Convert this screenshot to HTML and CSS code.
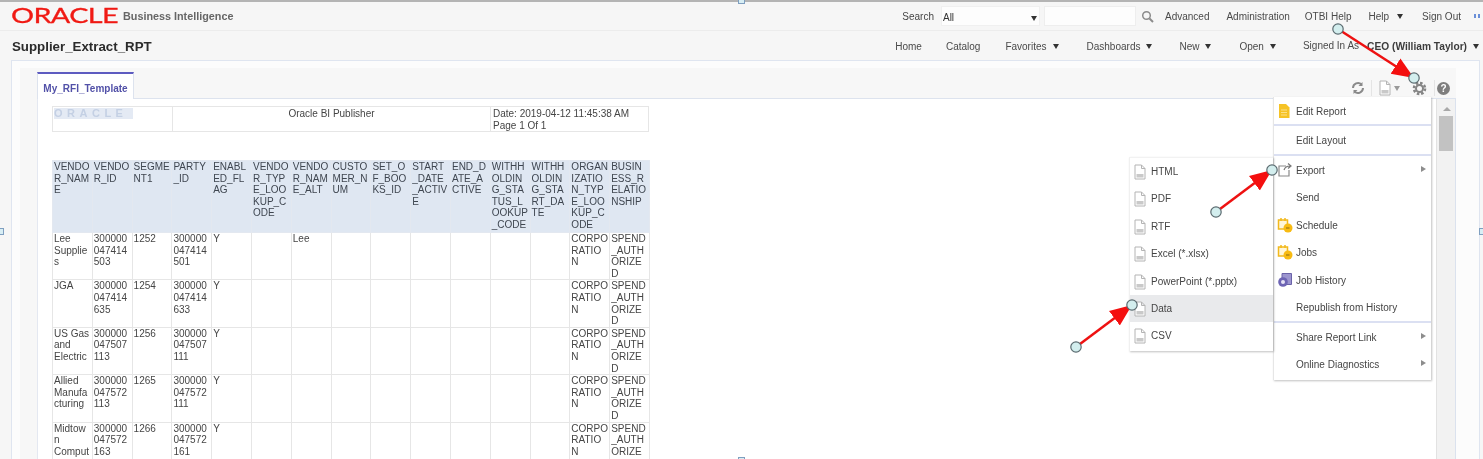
FILE: index.html
```html
<!DOCTYPE html>
<html lang="en">
<head>
    <meta charset="UTF-8">
    <title>Supplier_Extract_RPT - Oracle Business Intelligence</title>
    <link rel="stylesheet" href="styles.css">
</head>
<body>
<svg class="defs" width="0" height="0">
    <symbol id="i-file" viewBox="0 0 14 16">
        <path d="M2 1h6.500L12 4.500V15H2zM8.500 1v3.500H12" fill="#fff" stroke="#b4b4b4"/>
        <path d="M3.500 10h7v3.500h-7z" fill="#c9c9c9"/>
    </symbol>
    <symbol id="i-doc" viewBox="0 0 14 16">
        <path d="M2 1h7l3.500 3.500V15H2z" fill="#f6c326"/>
        <path d="M4 7h6M4 9.500h6M4 12h6" stroke="#fbe08a"/>
    </symbol>
    <symbol id="i-export" viewBox="0 0 16 16">
        <path d="M9 4H2v10h10V8" fill="none" stroke="#8a8a8a" stroke-width="1.200"/>
        <path d="M7 8c1-3 3-4 6-4M11 1.500 14 4l-3 2.500" fill="none" stroke="#777" stroke-width="1.200"/>
    </symbol>
    <symbol id="i-cal" viewBox="0 0 16 16">
        <path d="M1.500 3h9v9h-9z" fill="#fff6d8" stroke="#f2b91d" stroke-width="1.500"/>
        <path d="M4 1v3M8 1v3" stroke="#f2b91d" stroke-width="1.500"/>
        <circle cx="11" cy="11" r="4.500" fill="#f8bb12"/>
        <path d="M9 11h3.500" stroke="#8a6a10"/>
    </symbol>
    <symbol id="i-history" viewBox="0 0 16 16">
        <path d="M5 1.500h9.500v11H5z" fill="#9c95cf" stroke="#6a62a8"/>
        <circle cx="6" cy="10" r="4.800" fill="#6d64b4"/>
        <circle cx="6" cy="10" r="2" fill="#e6e3f5"/>
    </symbol>
</svg>

<div class="page">
    <span class="grab grab-top"></span>
    <span class="grab grab-left"></span>
    <span class="grab grab-right"></span>
    <span class="grab grab-bottom"></span>

    <header class="topbar">
        <div class="brand">
            <span class="logo">ORACLE</span>
            <span class="product">Business Intelligence</span>
        </div>
        <div class="global-nav">
            <span class="search-label">Search</span>
            <div class="search-select">All<i class="caret"></i></div>
            <div class="search-input"></div>
            <svg class="search-icon" width="13" height="13" viewBox="0 0 13 13"><circle cx="5.500" cy="5.500" r="3.800" fill="none" stroke="#8c8c8c" stroke-width="1.500"/><path d="M8.500 8.500 12 12" stroke="#8c8c8c" stroke-width="2"/></svg>
            <a>Advanced</a>
            <a class="nav-admin">Administration</a>
            <a>OTBI Help</a>
            <a class="nav-help">Help<i class="caret"></i></a>
            <a>Sign Out</a>
            <span class="more-dots"></span>
        </div>
    </header>

    <nav class="navbar">
        <h1>Supplier_Extract_RPT</h1>
        <div class="main-nav">
            <a class="nav-home">Home</a>
            <a class="nav-catalog">Catalog</a>
            <a class="nav-wide">Favorites<i class="caret"></i></a>
            <a>Dashboards<i class="caret"></i></a>
            <a class="nav-wide">New<i class="caret"></i></a>
            <a>Open<i class="caret"></i></a>
            <a class="nav-signed">Signed In As</a>
            <a class="user">CEO (William Taylor)<i class="caret"></i></a>
        </div>
    </nav>

    <section class="panel">
        <div class="inner">
            <div class="tabstrip">
                <div class="tab">My_RFI_Template</div>
                <div class="tools">
                    <svg width="14" height="14" viewBox="0 0 14 14"><path d="M2 7a5 5 0 0 1 8.500-3.500M12 7a5 5 0 0 1-8.500 3.500" fill="none" stroke="#8a8a8a" stroke-width="2"/><path d="M11.500 1v4h-4zM2.500 13V9h4z" fill="#8a8a8a"/></svg>
                    <span class="tool-sep"></span>
                    <svg width="14" height="16" viewBox="0 0 14 16"><use href="#i-file"/></svg>
                    <i class="caret caret-light"></i>
                    <svg class="gear" width="15" height="15" viewBox="0 0 15 15"><circle cx="7.500" cy="7.500" r="5.500" fill="none" stroke="#858585" stroke-width="2.600" stroke-dasharray="2.500 1.800"/><circle cx="7.500" cy="7.500" r="3.500" fill="none" stroke="#858585" stroke-width="2"/></svg>
                    <span class="tool-sep"></span>
                    <span class="help">?</span>
                </div>
            </div>
            <div class="content">
                <div class="report">
                    <table class="report-head">
                        <tr>
                            <td class="head-logo"><span>ORACLE</span></td>
                            <td class="head-title">Oracle BI Publisher</td>
                            <td class="head-date">Date: 2019-04-12 11:45:38 AM<br>Page 1 Of 1</td>
                        </tr>
                    </table>
                    <table class="data">
                        <colgroup>
                            <col><col><col><col><col><col><col><col><col><col><col><col><col><col><col>
                        </colgroup>
                        <tr class="data-head">
                            <th>VENDO<br>R_NAM<br>E</th>
                            <th>VENDO<br>R_ID</th>
                            <th>SEGME<br>NT1</th>
                            <th>PARTY<br>_ID</th>
                            <th>ENABL<br>ED_FL<br>AG</th>
                            <th>VENDO<br>R_TYP<br>E_LOO<br>KUP_C<br>ODE</th>
                            <th>VENDO<br>R_NAM<br>E_ALT</th>
                            <th>CUSTO<br>MER_N<br>UM</th>
                            <th>SET_O<br>F_BOO<br>KS_ID</th>
                            <th>START<br>_DATE<br>_ACTIV<br>E</th>
                            <th>END_D<br>ATE_A<br>CTIVE</th>
                            <th>WITHH<br>OLDIN<br>G_STA<br>TUS_L<br>OOKUP<br>_CODE</th>
                            <th>WITHH<br>OLDIN<br>G_STA<br>RT_DA<br>TE</th>
                            <th>ORGAN<br>IZATIO<br>N_TYP<br>E_LOO<br>KUP_C<br>ODE</th>
                            <th>BUSIN<br>ESS_R<br>ELATIO<br>NSHIP</th>
                        </tr>
                        <tr>
                            <td>Lee<br>Supplie<br>s</td><td>300000<br>047414<br>503</td><td>1252</td><td>300000<br>047414<br>501</td><td>Y</td><td></td><td>Lee</td><td></td><td></td><td></td><td></td><td></td><td></td><td>CORPO<br>RATIO<br>N</td><td>SPEND<br>_AUTH<br>ORIZE<br>D</td>
                        </tr>
                        <tr>
                            <td>JGA</td><td>300000<br>047414<br>635</td><td>1254</td><td>300000<br>047414<br>633</td><td>Y</td><td></td><td></td><td></td><td></td><td></td><td></td><td></td><td></td><td>CORPO<br>RATIO<br>N</td><td>SPEND<br>_AUTH<br>ORIZE<br>D</td>
                        </tr>
                        <tr>
                            <td>US Gas<br>and<br>Electric</td><td>300000<br>047507<br>113</td><td>1256</td><td>300000<br>047507<br>111</td><td>Y</td><td></td><td></td><td></td><td></td><td></td><td></td><td></td><td></td><td>CORPO<br>RATIO<br>N</td><td>SPEND<br>_AUTH<br>ORIZE<br>D</td>
                        </tr>
                        <tr>
                            <td>Allied<br>Manufa<br>cturing</td><td>300000<br>047572<br>113</td><td>1265</td><td>300000<br>047572<br>111</td><td>Y</td><td></td><td></td><td></td><td></td><td></td><td></td><td></td><td></td><td>CORPO<br>RATIO<br>N</td><td>SPEND<br>_AUTH<br>ORIZE<br>D</td>
                        </tr>
                        <tr class="last-row">
                            <td>Midtow<br>n<br>Comput</td><td>300000<br>047572<br>163</td><td>1266</td><td>300000<br>047572<br>161</td><td>Y</td><td></td><td></td><td></td><td></td><td></td><td></td><td></td><td></td><td>CORPO<br>RATIO<br>N</td><td>SPEND<br>_AUTH<br>ORIZE</td>
                        </tr>
                    </table>
                </div>
                <div class="scrollbar">
                    <i class="scroll-up"></i>
                    <div class="scroll-thumb"></div>
                </div>
            </div>
        </div>
    </section>

    <ul class="menu menu-main">
        <li class="group-end"><svg width="14" height="16"><use href="#i-doc"/></svg>Edit Report</li>
        <li class="group-end group-tall">Edit Layout</li>
        <li><svg width="16" height="16"><use href="#i-export"/></svg>Export<i class="sub-arrow"></i></li>
        <li>Send</li>
        <li><svg width="16" height="16"><use href="#i-cal"/></svg>Schedule</li>
        <li><svg width="16" height="16"><use href="#i-cal"/></svg>Jobs</li>
        <li><svg width="16" height="16"><use href="#i-history"/></svg>Job History</li>
        <li class="group-end group-tall">Republish from History</li>
        <li>Share Report Link<i class="sub-arrow"></i></li>
        <li>Online Diagnostics<i class="sub-arrow"></i></li>
    </ul>

    <ul class="menu menu-sub">
        <li><svg width="14" height="16"><use href="#i-file"/></svg>HTML</li>
        <li><svg width="14" height="16"><use href="#i-file"/></svg>PDF</li>
        <li><svg width="14" height="16"><use href="#i-file"/></svg>RTF</li>
        <li><svg width="14" height="16"><use href="#i-file"/></svg>Excel (*.xlsx)</li>
        <li><svg width="14" height="16"><use href="#i-file"/></svg>PowerPoint (*.pptx)</li>
        <li class="hover"><svg width="14" height="16"><use href="#i-file"/></svg>Data</li>
        <li><svg width="14" height="16"><use href="#i-file"/></svg>CSV</li>
    </ul>

    <!-- setas vermelhas de anotacao -->
    <svg class="notes" width="1483" height="459" viewBox="0 0 1483 459">
        <defs>
            <marker id="head" markerUnits="userSpaceOnUse" markerWidth="24" markerHeight="20" refX="22" refY="10" orient="auto">
                <path d="M0 1 22 10 0 19z" fill="#f40f0f"/>
            </marker>
        </defs>
        <line x1="1338" y1="29" x2="1414" y2="78" stroke="#ee1111" stroke-width="2.500" marker-end="url(#head)"/>
        <line x1="1216" y1="212" x2="1272" y2="170" stroke="#ee1111" stroke-width="2.500" marker-end="url(#head)"/>
        <line x1="1076" y1="347" x2="1132" y2="305" stroke="#ee1111" stroke-width="2.500" marker-end="url(#head)"/>
        <g fill="#d3eeee" stroke="#5b6b70" stroke-width="1.200">
            <circle cx="1338" cy="29" r="5.200"/>
            <circle cx="1414" cy="78" r="5.200"/>
            <circle cx="1216" cy="212" r="5.200"/>
            <circle cx="1272" cy="170" r="5.200"/>
            <circle cx="1076" cy="347" r="5.200"/>
            <circle cx="1132" cy="305" r="5.200"/>
        </g>
    </svg>
</div>
</body>
</html>
```

FILE: styles.css
```css
/* pagina inteira com leve desfoque, igual ao print */
html, body { margin: 0; height: 100%; overflow: hidden; background-color: #fff; }
body { font-family: "Liberation Sans", Arial, sans-serif; font-size: 10px; color: #454545; }
.defs { position: absolute; }
.page { position: relative; width: 1483px; height: 459px; overflow: hidden; background-color: #f6f6f6; filter: blur(0.55px); display: flex; flex-direction: column; }
a { color: #4a4a4a; }

.caret { display: inline-block; margin-left: 6px; border-left: 3.5px solid transparent; border-right: 3.5px solid transparent; border-top: 5px solid #333; vertical-align: 1px; }
.caret-light { border-top-color: #9a9a9a; margin: 0 0 0 2px; }

.topbar { height: 31px; flex: none; display: flex; align-items: center; border-top: 2px solid #b4b4b4; box-sizing: border-box; border-bottom: 1px solid #ececec; }
.brand { display: flex; align-items: center; margin-left: 11px; }
.logo { display: inline-block; width: 107px; margin-top: -2px; color: #f01a14; font-family: "Lato", sans-serif; font-size: 22px; line-height: 18px; transform-origin: left center; transform: scaleX(1.31); letter-spacing: -0.5px; -webkit-text-stroke: 0.3px #f01a14; }
.product { margin-left: 5px; font-size: 10.800px; font-weight: bold; color: #666; }
.global-nav { margin-left: auto; display: flex; align-items: center; gap: 17px; padding-right: 1px; }
.nav-admin { margin-right: -2px; }
.nav-help { margin-right: 2px; }
.nav-help .caret { margin-left: 8px; }
.search-label { margin-right: -10px; }
.search-select { width: 99px; height: 20px; line-height: 22px; box-sizing: border-box; padding-left: 1px; background-color: #fdfdfd; border: 1px solid #f0f0f0; position: relative; margin-right: -13px; color: #333; }
.search-select .caret { position: absolute; right: 2px; top: 9px; }
.search-input { width: 92px; height: 20px; box-sizing: border-box; background-color: #fdfdfd; border: 1px solid #eee; margin-right: -13px; }
.search-icon { margin-left: 1px; margin-right: -6px; }
.more-dots { width: 8px; height: 4px; margin-left: -4px; background: linear-gradient(90deg, #6a8fd8 0 2px, transparent 2px 4px, #6a8fd8 4px 6px, transparent 6px); }

.navbar { height: 29px; flex: none; display: flex; align-items: center; padding: 1px 0 0 12px; box-sizing: border-box; }
.navbar h1 { margin: 0; font-size: 13.300px; color: #2b2b2b; }
.main-nav { margin-left: auto; display: flex; align-items: center; gap: 27px; padding-right: 4px; }
.nav-home { margin-right: -3px; }
.nav-catalog { margin-right: -2px; }
.nav-wide { margin-right: 1px; }
.nav-signed { margin-top: -2px; }
.main-nav .user { margin-left: -19px; font-weight: bold; color: #3c3c3c; font-size: 10.200px; }

.panel { flex: 1; min-height: 0; margin: 0 3px 0 11px; border: 1px solid #dfe5f0; border-bottom: 0; background-color: #fcfcfc; padding: 7px 23px 0 8px; display: flex; }
.inner { flex: 1; min-width: 0; background-color: #f7f7f7; padding-left: 17px; display: flex; flex-direction: column; }
.tabstrip { height: 31px; flex: none; box-sizing: border-box; display: flex; align-items: flex-end; border-bottom: 1px solid #dde3ee; }
.tab { width: 97px; height: 27px; box-sizing: border-box; margin-bottom: -1px; background-color: #fff; border: 1px solid #dde3ee; border-bottom: 0; border-top: 2px solid #5d5bc0; text-align: center; line-height: 29px; color: #5251a8; font-weight: bold; font-size: 10px; }
.tools { margin-left: auto; display: flex; align-items: center; height: 24px; margin-bottom: -2px; padding-right: 6px; }
.tool-sep { width: 1px; height: 16px; background-color: #e4e4e4; margin: 0 6px; }
.gear { margin-left: 12px; margin-right: 1.500px; }
.help { width: 13px; height: 13px; margin-left: -4px; border-radius: 50%; background-color: #7e7e7e; color: #fff; font-weight: bold; font-size: 10px; line-height: 13px; text-align: center; }

.content { flex: 1; min-height: 0; display: flex; }
.report { flex: 1; min-width: 0; background-color: #fff; padding: 7px 0 0 14px; border-left: 1px solid #e4e8f1; }
.scrollbar { width: 20px; flex: none; box-sizing: border-box; margin-left: 0; background-color: #f2f2f2; border-left: 1px solid #e2e2e2; border-right: 1px solid #dbe2ee; padding: 8px 0 0 2px; }
.scroll-up { display: block; width: 0; margin-left: 4px; border-left: 4px solid transparent; border-right: 4px solid transparent; border-bottom: 4px solid #a8a8a8; }
.scroll-thumb { width: 14px; height: 35px; margin-top: 5px; background-color: #c2c2c2; }

.report-head { width: 597px; height: 25px; border-collapse: collapse; table-layout: fixed; }
.report-head td { border: 1px solid #e6e6e6; padding: 1px 2px 0; vertical-align: top; line-height: 11.500px; }
.head-logo { width: 115px; }
.head-logo span { display: block; width: 79px; margin-left: -1px; background-color: #e4eaf4; color: #c4d0e4; font-size: 11px; font-weight: bold; letter-spacing: 4.500px; line-height: 11px; }
.head-title { text-align: center; }
.head-date { width: 153px; }

.data { width: 597px; margin-top: 28px; border-collapse: collapse; table-layout: fixed; }
.data col { width: 39.800px; }
.data th, .data td { padding: 0 0 0 1px; border: 1px solid #e6e6e6; font-weight: normal; vertical-align: top; text-align: left; line-height: 11.600px; overflow: hidden; white-space: nowrap; }
.data th { height: 71px; background-color: #dfe7f2; border-color: #e3e8f0; color: #3f4650; }
.data td { height: 46.400px; }
.data .last-row td { height: 36px; border-bottom: 0; }

.menu { position: absolute; margin: 0; padding: 0; list-style: none; background-color: #fff; box-shadow: 1px 1px 2px rgba(0, 0, 0, 0.25); }
.menu li { position: relative; height: 27.400px; line-height: 28px; box-sizing: border-box; }
.menu svg { position: absolute; top: 6px; }
.menu-main { left: 1273px; top: 97px; width: 157px; padding-bottom: 2px; border-left: 1px solid #e6e6e6; }
.menu-main li { padding-left: 22px; line-height: 29px; }
.menu-main svg { left: 3px; }
.menu-main .group-end { height: 29px; border-bottom: 2px solid #dbe0f2; }
.menu-main .group-tall { height: 30px; }
.menu-sub { left: 1129px; top: 157px; width: 143px; padding-bottom: 1px; border-left: 1px solid #f0f0f0; border-top: 1px solid #f2f2f2; }
.menu-sub li { padding-left: 21px; }
.menu-sub svg { left: 3px; }
.menu-sub .hover { background-color: #e9eaec; }
.sub-arrow { position: absolute; right: 5px; top: 10px; border-top: 3.500px solid transparent; border-bottom: 3.500px solid transparent; border-left: 5px solid #8d8d8d; }

.notes { position: absolute; left: 0; top: 0; }
.grab { position: absolute; width: 7px; height: 7px; box-sizing: border-box; background-color: #d8eef4; border: 1px solid #7f9fc0; z-index: 2; }
.grab-top { left: 738px; top: -3px; }
.grab-bottom { left: 738px; bottom: -5px; }
.grab-left { left: -3px; top: 228px; }
.grab-right { right: -3px; top: 228px; }
```
